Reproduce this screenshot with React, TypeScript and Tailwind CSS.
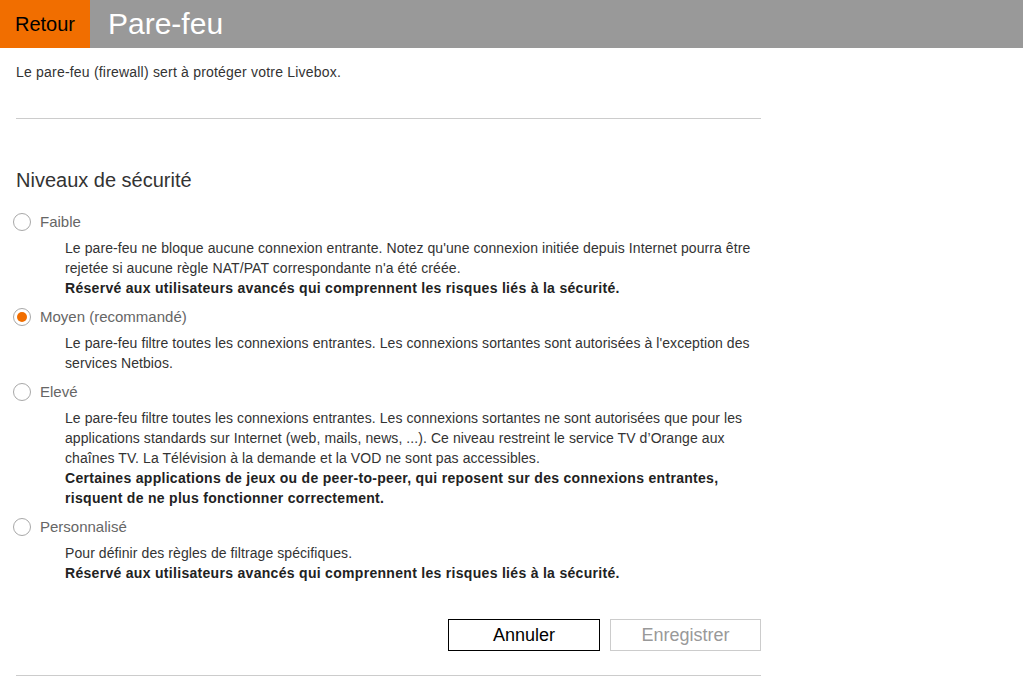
import React, { useState } from 'react';

const options = [
  {
    id: 'faible',
    label: 'Faible',
    text: "Le pare-feu ne bloque aucune connexion entrante. Notez qu'une connexion initiée depuis Internet pourra être rejetée si aucune règle NAT/PAT correspondante n'a été créée.",
    warning: 'Réservé aux utilisateurs avancés qui comprennent les risques liés à la sécurité.',
  },
  {
    id: 'moyen',
    label: 'Moyen (recommandé)',
    text: "Le pare-feu filtre toutes les connexions entrantes. Les connexions sortantes sont autorisées à l'exception des services Netbios.",
  },
  {
    id: 'eleve',
    label: 'Elevé',
    text: "Le pare-feu filtre toutes les connexions entrantes. Les connexions sortantes ne sont autorisées que pour les applications standards sur Internet (web, mails, news, ...). Ce niveau restreint le service TV d’Orange aux chaînes TV. La Télévision à la demande et la VOD ne sont pas accessibles.",
    warning: 'Certaines applications de jeux ou de peer-to-peer, qui reposent sur des connexions entrantes, risquent de ne plus fonctionner correctement.',
  },
  {
    id: 'perso',
    label: 'Personnalisé',
    text: 'Pour définir des règles de filtrage spécifiques.',
    warning: 'Réservé aux utilisateurs avancés qui comprennent les risques liés à la sécurité.',
  },
];

function Radio({ checked }: { checked: boolean }) {
  return (
    <span className="w-[18px] h-[18px] rounded-full border border-[#a8a8a8] bg-white flex items-center justify-center shrink-0">
      {checked && <span className="w-[10px] h-[10px] rounded-full bg-[#f16e00]" />}
    </span>
  );
}

export default function App() {
  const [level, setLevel] = useState('moyen');

  return (
    <div className="w-[1023px] h-[681px] bg-white overflow-hidden font-['Liberation_Sans',Arial,sans-serif]">
      <div className="flex h-12 bg-[#999999]">
        <button className="w-[90px] bg-[#f16e00] text-black text-[20px] flex items-center justify-center">
          Retour
        </button>
        <h1 className="pl-[18px] text-white text-[30px] leading-[40px] flex items-center">Pare-feu</h1>
      </div>

      <div className="ml-4 w-[745px]">
        <p className="pt-[15px] text-[14px] tracking-[0.2px] leading-[18px] text-[#333]">
          Le pare-feu (firewall) sert à protéger votre Livebox.
        </p>
        <div className="mt-[37px] border-t border-[#cccccc]" />

        <h2 className="mt-[49px] text-[20px] leading-6 text-[#333]">Niveaux de sécurité</h2>

        <div className="mt-5">
          {options.map((o, i) => (
            <div key={o.id} className={i > 0 ? 'mt-[9px]' : ''}>
              <label
                className="flex items-center gap-[9px] h-5 -ml-[3px] cursor-pointer"
                onClick={() => setLevel(o.id)}
              >
                <Radio checked={level === o.id} />
                <span className="text-[15px] text-[#666]">{o.label}</span>
              </label>
              <div className="mt-[6px] ml-[49px] text-[14px] tracking-[0.08px] leading-5 text-[#333]">
                <p>{o.text}</p>
                {o.warning && <p className="font-bold tracking-[0.3px] text-[#222]">{o.warning}</p>}
              </div>
            </div>
          ))}
        </div>

        <div className="mt-9 flex justify-end gap-[10px]">
          <button className="w-[152px] h-8 border border-black text-[18px] text-black bg-white">
            Annuler
          </button>
          <button disabled className="w-[151px] h-8 border border-[#cccccc] text-[18px] text-[#999] bg-white">
            Enregistrer
          </button>
        </div>

        <div className="mt-6 border-t border-[#cccccc]" />
      </div>
    </div>
  );
}
